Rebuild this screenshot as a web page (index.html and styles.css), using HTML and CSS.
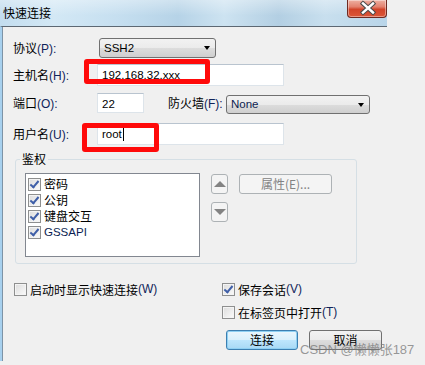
FILE: index.html
```html
<!DOCTYPE html>
<html lang="zh-CN">
<head>
    <meta charset="UTF-8">
    <title>快速连接</title>
    <link rel="stylesheet" href="styles.css">
</head>
<body>
    <div class="window">
        <div class="titlebar">
            <span class="title">快速连接</span>
            <div class="close-btn">
                <svg width="40" height="18" viewBox="0 0 40 18">
                    <path d="M15 4.5 L25 13.5 M25 4.5 L15 13.5" stroke="#4a4a4a" stroke-width="4.4" stroke-linecap="square"/>
                    <path d="M15 4.5 L25 13.5 M25 4.5 L15 13.5" stroke="#fff" stroke-width="2.4" stroke-linecap="square"/>
                </svg>
            </div>
        </div>

        <div class="content">
            <div class="row row-protocol">
                <label class="label">协议<span class="key">(P):</span></label>
                <div class="combo combo-protocol">SSH2<span class="arrow"></span></div>
            </div>
            <div class="row row-host">
                <label class="label">主机名<span class="key">(H):</span></label>
                <div class="textbox textbox-wide">192.168.32.xxx</div>
            </div>
            <div class="row row-port">
                <label class="label">端口<span class="key">(O):</span></label>
                <div class="textbox textbox-port">22</div>
                <label class="label-firewall">防火墙<span class="key">(F):</span></label>
                <div class="combo combo-firewall">None<span class="arrow"></span></div>
            </div>
            <div class="row row-user">
                <label class="label">用户名<span class="key">(U):</span></label>
                <div class="textbox textbox-wide">root<span class="caret"></span></div>
            </div>

            <fieldset class="auth">
                <legend>鉴权</legend>
                <div class="auth-inner">
                    <div class="listbox">
                        <div class="list-item"><span class="check checked"></span>密码</div>
                        <div class="list-item"><span class="check checked"></span>公钥</div>
                        <div class="list-item"><span class="check checked"></span>键盘交互</div>
                        <div class="list-item"><span class="check checked"></span><span class="latin">GSSAPI</span></div>
                    </div>
                    <div class="order-buttons">
                        <div class="small-btn"><span class="tri-up"></span></div>
                        <div class="small-btn"><span class="tri-down"></span></div>
                    </div>
                    <div class="btn btn-disabled btn-props">属性(E)...</div>
                </div>
            </fieldset>

            <div class="options">
                <div class="option-col option-left">
                    <div class="option"><span class="check"></span>启动时显示快速连接<span class="key">(W)</span></div>
                </div>
                <div class="option-col">
                    <div class="option"><span class="check checked"></span>保存会话<span class="key">(V)</span></div>
                    <div class="option"><span class="check"></span>在标签页中打开<span class="key">(T)</span></div>
                </div>
            </div>

            <div class="actions">
                <div class="btn btn-default">连接</div>
                <div class="btn">取消</div>
            </div>
        </div>

        <div class="mark mark-host"></div>
        <div class="mark mark-user"></div>
        <div class="watermark">CSDN @懒懒张187</div>
    </div>
</body>
</html>
```

FILE: styles.css
```css
body {
    margin: 0;
    background: #f0f0f0;
    font-family: "Liberation Sans", "Noto Sans CJK SC", sans-serif;
    font-size: 12px;
    color: #000;
}

.window {
    position: relative;
    width: 387px;
    height: 361px;
}

.titlebar {
    height: 26px;
    display: flex;
    justify-content: space-between;
    align-items: flex-start;
    background:
        linear-gradient(to bottom, rgba(255, 255, 255, 0.35), rgba(255, 255, 255, 0) 60%),
        linear-gradient(to right, #c3ddef 0%, #d3e8f5 14%, #c6dff0 30%, #b6d3e7 46%, #cde3f1 58%, #b3cfe3 72%, #c8dfee 84%, #b9d5e9 100%);
}

.title {
    padding: 4px 0 0 3px;
    font-family: "Noto Sans CJK SC", sans-serif;
    font-size: 12px;
    line-height: 18px;
}

.close-btn {
    width: 40px;
    height: 18px;
    box-sizing: border-box;
    border: 1px solid #6e2a22;
    border-top: none;
    border-radius: 0 0 4px 4px;
    background: linear-gradient(to bottom, #eeb0a2 0%, #e3816e 40%, #d2442a 55%, #dc5638 100%);
    box-shadow: inset 0 0 0 1px rgba(255, 255, 255, 0.4);
}

.close-btn svg {
    display: block;
    margin-top: -1px;
}

.content {
    height: 334px;
    border-top: 1px solid #5d6873;
    border-left: 2px solid #a7d0ee;
    box-shadow: inset 1px 0 #7d93a6;
    padding: 11px 0 0 11px;
}

.row {
    display: flex;
    align-items: center;
}

.row-protocol {
    height: 20px;
}

.row-host {
    height: 22px;
    margin-top: 6px;
}

.row-port {
    height: 20px;
    margin-top: 7px;
}

.row-user {
    height: 22px;
    margin-top: 10px;
}

.label {
    width: 84px;
    font-family: "Noto Sans CJK SC", sans-serif;
    line-height: 16px;
}

.key {
    font-family: "Liberation Sans", sans-serif;
    color: #10245a;
}

.label-firewall {
    margin-left: 24px;
    width: 58px;
    font-family: "Noto Sans CJK SC", sans-serif;
    line-height: 16px;
}

.combo {
    position: relative;
    box-sizing: border-box;
    height: 20px;
    padding-left: 4px;
    line-height: 18px;
    font-size: 11.5px;
    border: 1px solid #707070;
    border-radius: 3px;
    background: linear-gradient(to bottom, #f2f2f2 0%, #ebebeb 50%, #dddddd 50%, #cfcfcf 100%);
}

.combo-protocol {
    margin-left: 2px;
    width: 117px;
}

.combo-firewall {
    width: 144px;
    height: 19px;
    line-height: 17px;
    margin-top: 3px;
    color: #0d1d50;
}

.arrow {
    position: absolute;
    right: 5px;
    top: 7px;
    border-left: 3.5px solid transparent;
    border-right: 3.5px solid transparent;
    border-top: 4px solid #000;
}

.textbox {
    box-sizing: border-box;
    height: 100%;
    padding-left: 4px;
    line-height: 20px;
    font-size: 11.5px;
    background: #fff;
    border: 1px solid #dde4ea;
    border-top-color: #b9c4cf;
}

.textbox-wide {
    width: 187px;
}

.textbox-port {
    width: 47px;
}

.caret {
    display: inline-block;
    width: 1px;
    height: 14px;
    margin-left: 1px;
    vertical-align: -3px;
    background: #000;
}

.auth {
    width: 342px;
    box-sizing: border-box;
    margin: 7px 0 0 2px;
    padding: 7px 0 6px 9px;
    border: 1px solid #d5dfe5;
    border-radius: 3px;
}

.auth legend {
    margin-left: -5px;
    padding: 0 2px;
    font-family: "Noto Sans CJK SC", sans-serif;
    font-size: 12px;
    line-height: 14px;
}

.auth-inner {
    display: flex;
    align-items: flex-start;
}

.listbox {
    width: 175px;
    height: 84px;
    box-sizing: border-box;
    border: 1px solid #828790;
    background: #fff;
    padding: 2px 0 0 2px;
}

.list-item {
    display: flex;
    align-items: center;
    height: 16px;
    font-family: "Noto Sans CJK SC", sans-serif;
    line-height: 16px;
}

.latin {
    font-family: "Liberation Sans", sans-serif;
    font-size: 11.5px;
    color: #0c1e52;
}

.check {
    flex: none;
    position: relative;
    width: 13px;
    height: 13px;
    box-sizing: border-box;
    margin-right: 3px;
    border: 1px solid #8e8f8f;
    background: linear-gradient(135deg, #dcdcdc, #fbfbfb);
    box-shadow: inset 0 0 0 1px #f4f4f4;
}

.check.checked::after {
    content: "";
    position: absolute;
    left: 3px;
    top: 0;
    width: 3px;
    height: 7px;
    border-right: 2px solid #3f5fa8;
    border-bottom: 2px solid #3f5fa8;
    transform: rotate(40deg);
}

.order-buttons {
    display: flex;
    flex-direction: column;
    gap: 8px;
    margin-left: 11px;
    margin-top: 1px;
}

.small-btn {
    width: 17px;
    height: 20px;
    box-sizing: border-box;
    border: 1px solid #adb2b5;
    border-radius: 3px;
    background: #f4f4f4;
    display: flex;
    align-items: center;
    justify-content: center;
}

.tri-up {
    border-left: 6px solid transparent;
    border-right: 6px solid transparent;
    border-bottom: 6px solid #838383;
}

.tri-down {
    border-left: 6px solid transparent;
    border-right: 6px solid transparent;
    border-top: 6px solid #838383;
}

.btn {
    width: 73px;
    height: 20px;
    box-sizing: border-box;
    border: 1px solid #707070;
    border-radius: 3px;
    background: linear-gradient(to bottom, #f2f2f2 0%, #ebebeb 50%, #dddddd 50%, #cfcfcf 100%);
    font-family: "Noto Sans CJK SC", sans-serif;
    line-height: 18px;
    text-align: center;
}

.btn-disabled {
    border-color: #adb2b5;
    background: #f4f4f4;
    color: #838383;
}

.btn-props {
    width: 93px;
    margin-left: 11px;
    margin-top: 1px;
}

.options {
    display: flex;
    margin-top: 19px;
}

.option-left {
    width: 208px;
    padding-left: 1px;
}

.option-col {
    display: flex;
    flex-direction: column;
    gap: 10px;
}

.option {
    display: flex;
    align-items: center;
    height: 13px;
    font-family: "Noto Sans CJK SC", sans-serif;
    line-height: 13px;
}

.actions {
    display: flex;
    gap: 11px;
    margin: 11px 0 0 213px;
}

.btn-default {
    width: 72px;
    border-color: #3c7fb1;
    background: linear-gradient(to bottom, #eaf6fd 0%, #d9f0fc 50%, #bee6fd 50%, #a7d9f5 100%);
    box-shadow: inset 0 0 0 1px #8fd0f3;
}

.mark {
    position: absolute;
    box-sizing: border-box;
    border: 5px solid #ff0a0a;
    border-radius: 3px;
}

.mark-host {
    left: 84px;
    top: 59px;
    width: 126px;
    height: 25px;
}

.mark-user {
    left: 82px;
    top: 123px;
    width: 77px;
    height: 29px;
}

.watermark {
    position: absolute;
    left: 300px;
    top: 341px;
    font-family: "Liberation Sans", "Noto Sans CJK SC", sans-serif;
    font-size: 13px;
    line-height: 17px;
    color: rgba(120, 120, 120, 0.75);
    white-space: nowrap;
}
```
